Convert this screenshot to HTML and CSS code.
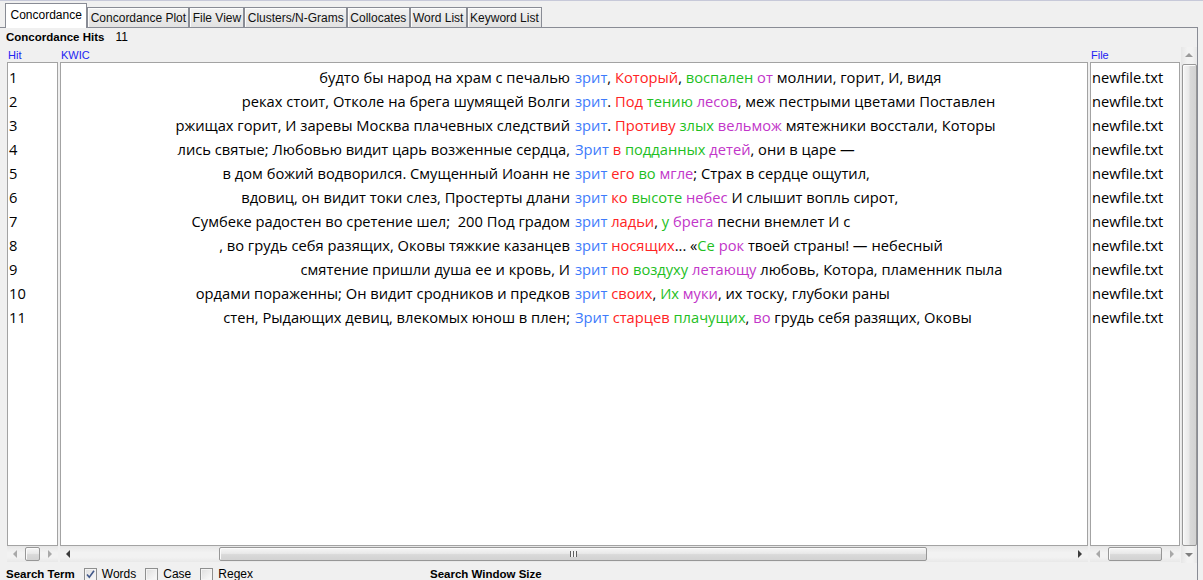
FILE: index.html
```html
<!DOCTYPE html>
<html>
<head>
<meta charset="utf-8">
<link rel="stylesheet" href="styles.css">
</head>
<body>
<div class="app">
  <div class="tabbar">
    <div class="tab active">Concordance</div>
    <div class="tab">Concordance Plot</div>
    <div class="tab">File View</div>
    <div class="tab">Clusters/N-Grams</div>
    <div class="tab">Collocates</div>
    <div class="tab">Word List</div>
    <div class="tab">Keyword List</div>
  </div>
  <div class="panel">
    <div class="hits"><span class="hits-label">Concordance Hits</span><span class="hits-num">11</span></div>
    <div class="table">
      <div class="col col-hit">
        <div class="hdr">Hit</div>
        <div class="pane">
          <div class="rows">
            <div class="row">1</div><div class="row">2</div><div class="row">3</div><div class="row">4</div>
            <div class="row">5</div><div class="row">6</div><div class="row">7</div><div class="row">8</div>
            <div class="row">9</div><div class="row">10</div><div class="row">11</div>
          </div>
        </div>
        <div class="hscroll dim">
          <div class="btn"><i class="ar-l"></i></div>
          <div class="track"><div class="thumb" style="margin-left:2px;width:15px"></div></div>
          <div class="btn"><i class="ar-r"></i></div>
        </div>
      </div>
      <div class="col col-kwic">
        <div class="hdr">KWIC</div>
        <div class="pane">
          <div class="rows">
            <div class="krow"><div class="lc">будто бы народ на храм с печалью</div><div class="rc"><span class="b">зрит</span>, <span class="r">Который</span>, <span class="g">воспален</span> <span class="p">от</span> молнии, горит, И, видя</div></div>
            <div class="krow"><div class="lc">реках стоит, Отколе на брега шумящей Волги</div><div class="rc"><span class="b">зрит</span>. <span class="r">Под</span> <span class="g">тению</span> <span class="p">лесов</span>, меж пестрыми цветами Поставлен</div></div>
            <div class="krow"><div class="lc">ржищах горит, И заревы Москва плачевных следствий</div><div class="rc"><span class="b">зрит</span>. <span class="r">Противу</span> <span class="g">злых</span> <span class="p">вельмож</span> мятежники восстали, Которы</div></div>
            <div class="krow"><div class="lc">лись святые; Любовью видит царь возженные сердца,</div><div class="rc"><span class="b">Зрит</span> <span class="r">в</span> <span class="g">подданных</span> <span class="p">детей</span>, они в царе —</div></div>
            <div class="krow"><div class="lc">в дом божий водворился. Смущенный Иоанн не</div><div class="rc"><span class="b">зрит</span> <span class="r">его</span> <span class="g">во</span> <span class="p">мгле</span>; Страх в сердце ощутил,</div></div>
            <div class="krow"><div class="lc">вдовиц, он видит токи слез, Простерты длани</div><div class="rc"><span class="b">зрит</span> <span class="r">ко</span> <span class="g">высоте</span> <span class="p">небес</span> И слышит вопль сирот,</div></div>
            <div class="krow"><div class="lc">Сумбеке радостен во сретение шел;&nbsp; 200 Под градом</div><div class="rc"><span class="b">зрит</span> <span class="r">ладьи</span>, <span class="g">у</span> <span class="p">брега</span> песни внемлет И с</div></div>
            <div class="krow"><div class="lc">, во грудь себя разящих, Оковы тяжкие казанцев</div><div class="rc"><span class="b">зрит</span> <span class="r">носящих</span>... «<span class="g">Се</span> <span class="p">рок</span> твоей страны! — небесный</div></div>
            <div class="krow"><div class="lc">смятение пришли душа ее и кровь, И</div><div class="rc"><span class="b">зрит</span> <span class="r">по</span> <span class="g">воздуху</span> <span class="p">летающу</span> любовь, Котора, пламенник пыла</div></div>
            <div class="krow"><div class="lc">ордами пораженны; Он видит сродников и предков</div><div class="rc"><span class="b">зрит</span> <span class="r">своих</span>, <span class="g">Их</span> <span class="p">муки</span>, их тоску, глубоки раны</div></div>
            <div class="krow"><div class="lc">стен, Рыдающих девиц, влекомых юнош в плен;</div><div class="rc"><span class="b">Зрит</span> <span class="r">старцев</span> <span class="g">плачущих</span>, <span class="p">во</span> грудь себя разящих, Оковы</div></div>
          </div>
        </div>
        <div class="hscroll">
          <div class="btn"><i class="ar-l"></i></div>
          <div class="track"><div class="thumb" style="margin-left:143px;width:708px"><i class="grip"></i></div></div>
          <div class="btn"><i class="ar-r"></i></div>
        </div>
      </div>
      <div class="col col-file">
        <div class="hdr">File</div>
        <div class="pane">
          <div class="rows">
            <div class="row">newfile.txt</div><div class="row">newfile.txt</div><div class="row">newfile.txt</div><div class="row">newfile.txt</div>
            <div class="row">newfile.txt</div><div class="row">newfile.txt</div><div class="row">newfile.txt</div><div class="row">newfile.txt</div>
            <div class="row">newfile.txt</div><div class="row">newfile.txt</div><div class="row">newfile.txt</div>
          </div>
        </div>
        <div class="hscroll dim">
          <div class="btn"><i class="ar-l"></i></div>
          <div class="track"><div class="thumb" style="margin-left:2px;width:54px"></div></div>
          <div class="btn"><i class="ar-r"></i></div>
        </div>
      </div>
      <div class="vscroll">
        <div class="vbtn"><i class="ar-u"></i></div>
        <div class="vtrack"><div class="vthumb" style="margin-top:1px;height:482px"></div></div>
        <div class="vbtn"><i class="ar-d"></i></div>
      </div>
    </div>
    <div class="search">
      <span class="slabel">Search Term</span>
      <span class="cb checked"><svg width="11" height="11" viewBox="0 0 11 11"><path d="M2 5.5 L4.3 8.2 L9 1.8" fill="none" stroke="#42598a" stroke-width="1.6"/></svg></span><span class="cbt">Words</span>
      <span class="cb"></span><span class="cbt">Case</span>
      <span class="cb"></span><span class="cbt">Regex</span>
      <span class="slabel swin">Search Window Size</span>
    </div>
  </div>
</div>
</body>
</html>
```
FILE: styles.css
```css
* { box-sizing: border-box; }
html, body { margin: 0; padding: 0; }
body {
  width: 1203px;
  height: 580px;
  overflow: hidden;
  background: #f0f0f0;
  font-family: "Liberation Sans", Arial, sans-serif;
  color: #000;
}
.app {
  border-top: 1px solid #c7c9d9;
  height: 580px;
}
.tabbar {
  display: flex;
  align-items: flex-end;
  width: 1198px;
  height: 27px;
  padding-left: 5px;
  border-bottom: 1px solid #898c95;
}
.tab {
  height: 20px;
  padding: 3px 2.3px 0 2.3px;
  font-size: 12px;
  line-height: 15px;
  color: #111;
  border: 1px solid #898c95;
  border-bottom: none;
  background: linear-gradient(#f4f4f4, #e9e9e9 50%, #e2e2e2);
  box-shadow: inset 1px 1px 0 #fcfcfc;
  white-space: nowrap;
}
.tab.active {
  height: 25px;
  margin-bottom: -1px;
  padding: 4px 4.5px 0 4.5px;
  background: #fff;
  box-shadow: none;
  color: #000;
}
.panel {
  width: 1198px;
  height: 552px;
  border-right: 1px solid #898c95;
}
.hits {
  height: 17px;
  padding: 2px 0 0 6px;
  font-size: 11.5px;
  line-height: 14px;
  white-space: nowrap;
}
.hits-label { font-weight: bold; }
.hits-num { margin-left: 11px; font-size: 12px; }
.table {
  display: flex;
  height: 518px;
  padding-left: 7px;
}
.col {
  display: flex;
  flex-direction: column;
}
.col-hit { width: 51px; }
.col-kwic { width: 1028px; margin-left: 2px; }
.col-file { width: 90px; margin-left: 2px; }
.hdr {
  height: 17px;
  padding: 3px 0 0 1px;
  font-size: 11px;
  line-height: 14px;
  color: #2323f2;
}
.pane {
  height: 484px;
  background: #fff;
  border: 1px solid #a3a3a3;
  overflow: hidden;
}
.rows {
  padding-top: 2px;
  font-family: "Open Sans", "Noto Sans", sans-serif;
  font-size: 14.7px;
}
.row {
  height: 24px;
  line-height: 24px;
  padding-left: 1px;
  white-space: nowrap;
}
.krow {
  display: grid;
  grid-template-columns: 509px 1fr;
  height: 24px;
  line-height: 24px;
  white-space: nowrap;
}
.lc { text-align: right; overflow: hidden; }
.rc { padding-left: 5px; overflow: hidden; }
.b { color: #3e7bfb; }
.r { color: #ff2424; }
.g { color: #1fc01f; }
.p { color: #c236c9; }

.hscroll {
  display: flex;
  height: 16px;
  background: linear-gradient(#e6e6e6, #f2f2f2 40%, #f2f2f2 70%, #e8e8e8);
}
.btn {
  width: 16px;
  flex: none;
  display: flex;
  align-items: center;
  justify-content: center;
}
.track { flex: 1; display: flex; align-items: center; }
.thumb {
  height: 14px;
  flex: none;
  border: 1px solid #979797;
  border-radius: 2px;
  background: linear-gradient(#f6f6f6, #e9e9e9 45%, #d9d9d9 55%, #d2d2d2);
  box-shadow: inset 1px 1px 0 #fbfbfb;
  display: flex;
  align-items: center;
  justify-content: center;
}
.grip {
  display: block;
  width: 7px;
  height: 6px;
  background: repeating-linear-gradient(90deg, #5f5f5f 0 1px, #f4f4f4 1px 3px);
}
.ar-l, .ar-r, .ar-u, .ar-d { display: block; width: 0; height: 0; }
.ar-l { border-top: 4px solid transparent; border-bottom: 4px solid transparent; border-right: 4px solid #3c3c3c; }
.ar-r { border-top: 4px solid transparent; border-bottom: 4px solid transparent; border-left: 4px solid #3c3c3c; }
.dim .ar-l { border-right-color: #a9a9a9; }
.dim .ar-r { border-left-color: #a9a9a9; }
.ar-u { border-left: 4px solid transparent; border-right: 4px solid transparent; border-bottom: 4px solid #9a9a9a; }
.ar-d { border-left: 4px solid transparent; border-right: 4px solid transparent; border-top: 4px solid #7e7e7e; }

.vscroll {
  width: 16px;
  margin-left: 1px;
  margin-top: 2px;
  height: 516px;
  display: flex;
  flex-direction: column;
  background: linear-gradient(90deg, #e6e6e6, #f2f2f2 40%, #f2f2f2 70%, #e8e8e8);
}
.vbtn {
  height: 16px;
  flex: none;
  display: flex;
  align-items: center;
  justify-content: center;
}
.vtrack { flex: 1; display: flex; flex-direction: column; align-items: center; }
.vthumb {
  width: 15px;
  flex: none;
  border: 1px solid #979797;
  border-radius: 2px;
  background: linear-gradient(90deg, #f6f6f6, #e9e9e9 45%, #d9d9d9 55%, #d2d2d2);
  box-shadow: inset 1px 1px 0 #fbfbfb;
}

.search {
  display: flex;
  align-items: center;
  height: 17px;
  padding: 5px 0 0 6px;
  font-size: 12px;
  white-space: nowrap;
}
.slabel { font-weight: bold; font-size: 11.5px; }
.cb {
  width: 13px;
  height: 13px;
  flex: none;
  border: 1px solid #8e8f8f;
  background: linear-gradient(135deg, #dedede, #fbfbfb);
  box-shadow: inset 0 0 0 1px #f4f4f4;
  display: flex;
  align-items: center;
  justify-content: center;
  margin-left: 9px;
}
.cbt { margin-left: 5px; font-size: 12px; }
.swin { margin-left: 177px; }
```
